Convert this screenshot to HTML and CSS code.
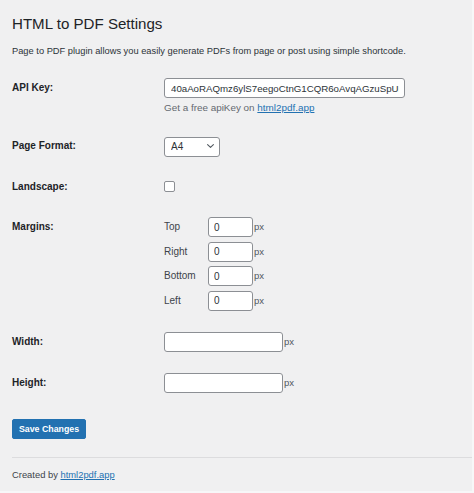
FILE: index.html
```html
<!DOCTYPE html>
<html lang="en">
<head>
<meta charset="utf-8">
<title>HTML to PDF Settings</title>
<link rel="stylesheet" href="styles.css">
</head>
<body>
<div class="page">
  <div class="wrap">
    <h1 class="title">HTML to PDF Settings</h1>
    <p class="intro">Page to PDF plugin allows you easily generate PDFs from page or post using simple shortcode.</p>

    <form class="form">
      <div class="row row-api">
        <label class="label" for="apikey">API Key:</label>
        <div class="field">
          <input id="apikey" class="input input-key" type="text" value="40aAoRAQmz6ylS7eegoCtnG1CQR6oAvqAGzuSpUIx7kQ2">
          <p class="hint">Get a free apiKey on <a href="#" class="link">html2pdf.app</a></p>
        </div>
      </div>

      <div class="row row-format">
        <label class="label" for="format">Page Format:</label>
        <div class="field">
          <div class="select-wrap">
            <select id="format" class="select">
              <option>A4</option>
            </select>
            <svg class="chevron" width="7" height="4" viewBox="0 0 7 4" aria-hidden="true"><path d="M0.6 0.6 L3.5 3.3 L6.4 0.6" fill="none" stroke="#50575e" stroke-width="1.1" stroke-linecap="round" stroke-linejoin="round"/></svg>
          </div>
        </div>
      </div>

      <div class="row row-check">
        <label class="label label-check" for="landscape">Landscape:</label>
        <div class="field">
          <input id="landscape" class="checkbox" type="checkbox">
        </div>
      </div>

      <div class="row row-margins">
        <span class="label">Margins:</span>
        <div class="field margins">
          <span class="sublabel">Top</span><input class="input input-small" type="text" value="0"><span class="unit">px</span>
          <span class="sublabel">Right</span><input class="input input-small" type="text" value="0"><span class="unit">px</span>
          <span class="sublabel">Bottom</span><input class="input input-small" type="text" value="0"><span class="unit">px</span>
          <span class="sublabel">Left</span><input class="input input-small" type="text" value="0"><span class="unit">px</span>
        </div>
      </div>

      <div class="row row-size">
        <label class="label" for="width">Width:</label>
        <div class="field inline">
          <input id="width" class="input input-size" type="text"><span class="unit">px</span>
        </div>
      </div>

      <div class="row row-size">
        <label class="label" for="height">Height:</label>
        <div class="field inline">
          <input id="height" class="input input-size" type="text"><span class="unit">px</span>
        </div>
      </div>

      <div class="actions">
        <button type="button" class="button">Save Changes</button>
      </div>
    </form>
  </div>

  <footer class="footer">
    <p class="footer-text">Created by <a href="#" class="link">html2pdf.app</a></p>
  </footer>
</div>
</body>
</html>
```

FILE: styles.css
```css
html, body {
  margin: 0;
  padding: 0;
}

body {
  background: #f7f7f8;
  font-family: "Liberation Sans", Arial, sans-serif;
  color: #1d2327;
}

.page {
  width: 472px;
  height: 491px;
  background: #f0f0f1;
  overflow: hidden;
}

.wrap {
  padding-left: 12px;
}

.title {
  margin: 16px 0 0;
  font-size: 15.1px;
  line-height: 15px;
  font-weight: 400;
  color: #1d2327;
}

.intro {
  margin: 13px 0 0;
  font-size: 9.3px;
  line-height: 14px;
  color: #2c3338;
}

.form {
  display: flex;
  flex-direction: column;
}

.row {
  display: grid;
  grid-template-columns: 152px 1fr;
  align-items: start;
}

.row-api { margin-top: 20px; }
.row-format { margin-top: 21px; }
.row-check { margin-top: 25px; }
.row-margins { margin-top: 25px; }
.row-size { margin-top: 21px; }

.label {
  font-size: 10px;
  font-weight: 700;
  line-height: 20px;
  color: #1d2327;
}

.label-check {
  line-height: 11px;
}

.field {
  display: flex;
  flex-direction: column;
  align-items: flex-start;
}

.field.inline {
  flex-direction: row;
  align-items: center;
}

.input {
  box-sizing: border-box;
  height: 20px;
  margin: 0;
  padding: 0 5px;
  border: 1px solid #8c8f94;
  border-radius: 3px;
  background: #fff;
  font-family: "Liberation Sans", Arial, sans-serif;
  font-size: 10px;
  color: #2c3338;
  outline: none;
}

.input-key {
  width: 241px;
  padding-left: 6px;
  font-size: 9.7px;
}

.input-small {
  width: 45px;
}

.input-size {
  width: 119px;
}

.hint {
  margin: 3px 0 0;
  font-size: 9.9px;
  line-height: 14px;
  color: #646970;
}

.link {
  color: #2271b1;
  text-decoration: underline;
}

.select-wrap {
  position: relative;
  width: 56px;
  height: 20px;
}

.select {
  box-sizing: border-box;
  width: 56px;
  height: 20px;
  margin: 0;
  padding: 0 0 0 6px;
  border: 1px solid #8c8f94;
  border-radius: 3px;
  background: #fff;
  -webkit-appearance: none;
  appearance: none;
  font-family: "Liberation Sans", Arial, sans-serif;
  font-size: 10px;
  color: #2c3338;
  outline: none;
}

.chevron {
  position: absolute;
  right: 6px;
  top: 8px;
  pointer-events: none;
}

.checkbox {
  -webkit-appearance: none;
  appearance: none;
  box-sizing: border-box;
  width: 11px;
  height: 11px;
  margin: 0;
  border: 1px solid #8c8f94;
  border-radius: 2px;
  background: #fff;
}

.margins {
  display: grid;
  grid-template-columns: 44px 45px auto;
  grid-auto-rows: 20px;
  row-gap: 4.67px;
  align-items: center;
}

.sublabel {
  font-size: 10px;
  line-height: 20px;
  color: #3c434a;
}

.unit {
  margin-left: 1px;
  font-size: 9.5px;
  line-height: 20px;
  color: #50575e;
}

.actions {
  margin-top: 25px;
}

.button {
  box-sizing: border-box;
  width: 74px;
  height: 20px;
  margin: 0;
  padding: 0;
  border: 1px solid #2271b1;
  border-radius: 2px;
  background: #2271b1;
  color: #fff;
  font-family: "Liberation Sans", Arial, sans-serif;
  font-size: 8.8px;
  font-weight: 700;
  line-height: 18px;
}

.footer {
  margin: 18px 0 0 12px;
  border-top: 1px solid #dcdcde;
}

.footer-text {
  margin: 10px 0 0;
  font-size: 9.4px;
  line-height: 14px;
  color: #3c434a;
}
```
